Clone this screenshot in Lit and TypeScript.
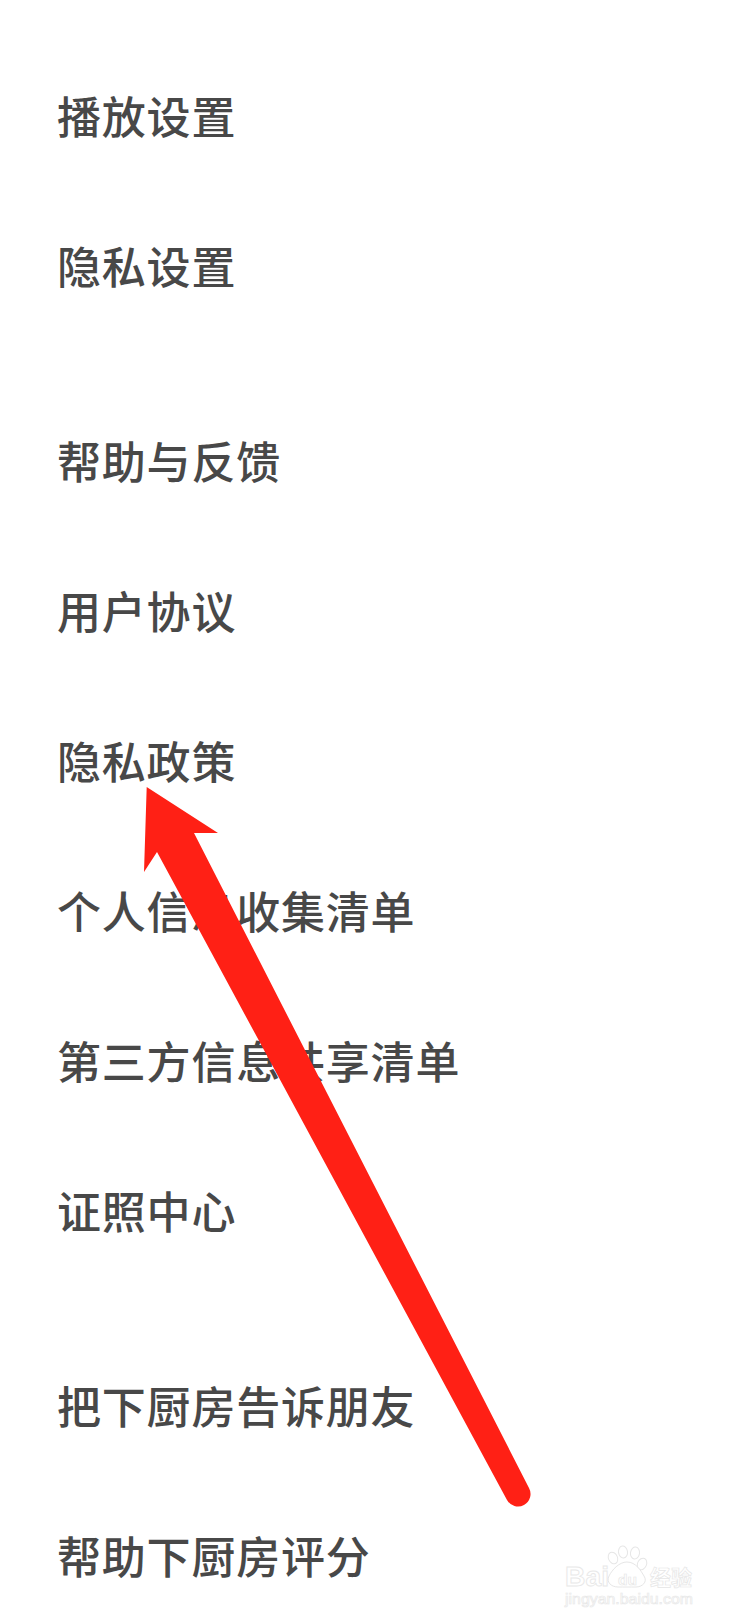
import { LitElement, html, css, svg } from "lit";
import { customElement } from "lit/decorators.js";

const groups = [
  ["播放设置", "隐私设置"],
  ["帮助与反馈", "用户协议", "隐私政策", "个人信息收集清单", "第三方信息共享清单", "证照中心"],
  ["把下厨房告诉朋友", "帮助下厨房评分"],
];

@customElement("app-root")
export class AppRoot extends LitElement {
  static styles = css`
    :host {
      display: block;
      position: relative;
      width: 734px;
      height: 1624px;
      overflow: hidden;
      background: #fff;
      font-family: "Noto Sans CJK SC", "Noto Sans", sans-serif;
    }
    .list {
      display: flex;
      flex-direction: column;
      gap: 45px;
      padding: 40px 0 0 57px;
    }
    .row {
      height: 150px;
      display: flex;
      align-items: center;
      font-size: 44px;
      letter-spacing: 0.8px;
      font-weight: 500;
      color: #484848;
      white-space: nowrap;
    }
    .group { display: flex; flex-direction: column; }
    .overlay {
      position: absolute;
      inset: 0;
      width: 734px;
      height: 1624px;
      pointer-events: none;
    }
    .wm-big {
      font-family: "Liberation Sans", sans-serif;
      font-size: 27px;
      font-weight: 700;
      fill: #fff;
      stroke: #e8e8e8;
      stroke-width: 0.9;
    }
    .wm-cjk {
      font-family: "Noto Sans CJK SC", sans-serif;
      font-size: 21px;
      font-weight: 700;
      fill: #fff;
      stroke: #e6e6e6;
      stroke-width: 0.7;
    }
    .wm-du {
      font-family: "Liberation Sans", sans-serif;
      font-size: 14px;
      font-weight: 700;
      fill: #fff;
      stroke: #e6e6e6;
      stroke-width: 0.6;
    }
    .wm-url {
      font-family: "Liberation Sans", sans-serif;
      font-size: 15.5px;
      fill: #fff;
      stroke: #e8e8e8;
      stroke-width: 0.7;
    }
  `;

  render() {
    return html`
      <div class="list">
        ${groups.map(
          (g) => html`<div class="group">${g.map((t) => html`<div class="row">${t}</div>`)}</div>`
        )}
      </div>
      <svg class="overlay" viewBox="0 0 734 1624">
        ${svg`
          <path fill="#ff2015" d="M146.7 787 L218 833 L194 833 L529 1488 A12.3 12.3 0 0 1 507 1500 L157 852 L144 872 Z"/>
          <g>
            <text class="wm-big" x="565" y="1586" textLength="44" lengthAdjust="spacingAndGlyphs">Bai</text>
            <g fill="#fff" stroke="#e6e6e6" stroke-width="1">
              <ellipse cx="613" cy="1558" rx="4.5" ry="6" transform="rotate(-25 613 1558)"/>
              <ellipse cx="623" cy="1552" rx="4.5" ry="6" transform="rotate(-8 623 1552)"/>
              <ellipse cx="635" cy="1553" rx="4.5" ry="6" transform="rotate(8 635 1553)"/>
              <ellipse cx="642" cy="1564" rx="4.5" ry="6" transform="rotate(25 642 1564)"/>
              <path d="M627 1562 C636 1562 641 1571 644 1576 C648 1582 642 1587 636 1587 C631 1587 623 1587 618 1587 C611 1587 606 1582 609 1576 C612 1570 619 1562 627 1562 Z"/>
            </g>
            <text class="wm-du" x="618" y="1585" textLength="19" lengthAdjust="spacingAndGlyphs">du</text>
            <text class="wm-cjk" x="650" y="1585" textLength="42" lengthAdjust="spacingAndGlyphs">经验</text>
            <text class="wm-url" x="565" y="1604" textLength="128" lengthAdjust="spacingAndGlyphs">jingyan.baidu.com</text>
          </g>
        `}
      </svg>
    `;
  }
}
